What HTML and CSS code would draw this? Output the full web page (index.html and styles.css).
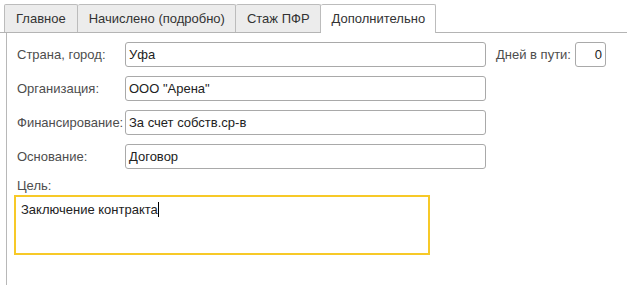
FILE: index.html
```html
<!DOCTYPE html>
<html lang="ru">
<head>
    <meta charset="UTF-8">
    <title>Командировка</title>
    <link rel="stylesheet" href="styles.css">
</head>
<body>
    <div class="tabs">
        <div class="tab">Главное</div>
        <div class="tab">Начислено (подробно)</div>
        <div class="tab">Стаж ПФР</div>
        <div class="tab active">Дополнительно</div>
    </div>
    <div class="panel">
        <div class="row">
            <span class="label">Страна, город:</span>
            <div class="field">Уфа</div>
            <span class="label days-label">Дней в пути:</span>
            <div class="field days">0</div>
        </div>
        <div class="row">
            <span class="label">Организация:</span>
            <div class="field">ООО "Арена"</div>
        </div>
        <div class="row">
            <span class="label">Финансирование:</span>
            <div class="field">За счет собств.ср-в</div>
        </div>
        <div class="row">
            <span class="label">Основание:</span>
            <div class="field">Договор</div>
        </div>
        <div class="goal-label">Цель:</div>
        <div class="memo">Заключение контракта<span class="caret"></span></div>
    </div>
</body>
</html>
```

FILE: styles.css
```css
body {
    margin: 0;
    background: #fff;
    font-family: "Liberation Sans", Arial, sans-serif;
    font-size: 13px;
    color: #333;
}
.tabs {
    display: flex;
    padding: 4px 0 0 4px;
    border-bottom: 1px solid #b4b4b4;
    height: 28px;
}
.tab {
    height: 27px;
    line-height: 27px;
    padding: 0 10px 0 11px;
    background: #ececec;
    border: 1px solid #bcbcbc;
    border-bottom: none;
    border-left: none;
    border-radius: 2px 2px 0 0;
    color: #333;
}
.tab:first-child {
    padding-right: 11px;
    border-left: 1px solid #bcbcbc;
}
.tab.active {
    background: #fff;
    height: 28px;
    margin-bottom: -1px;
}
.panel {
    margin-left: 6px;
    border-left: 1px solid #b8b8b8;
    padding: 9px 0 0 10px;
    height: 243px;
}
.row {
    display: flex;
    align-items: center;
    height: 25px;
    margin-bottom: 9px;
}
.label {
    width: 108px;
    color: #4d4d4d;
    white-space: nowrap;
}
.field {
    box-sizing: border-box;
    width: 361px;
    height: 25px;
    line-height: 23px;
    padding: 0 3px;
    border: 1px solid #a9a9a9;
    border-radius: 3px;
    color: #222;
}
.days-label {
    width: auto;
    margin-left: 10px;
    margin-right: 4px;
}
.field.days {
    width: 31px;
    text-align: right;
}
.goal-label {
    margin-top: 1px;
    height: 15px;
    line-height: 15px;
    color: #4d4d4d;
}
.memo {
    box-sizing: border-box;
    margin: 2px 0 0 -3px;
    width: 416px;
    height: 60px;
    padding: 4px 5px;
    line-height: 18px;
    border: 2px solid #f7c928;
    color: #222;
}
.caret {
    display: inline-block;
    width: 0;
    height: 15px;
    border-left: 1px solid #000;
    vertical-align: -3px;
}
```
